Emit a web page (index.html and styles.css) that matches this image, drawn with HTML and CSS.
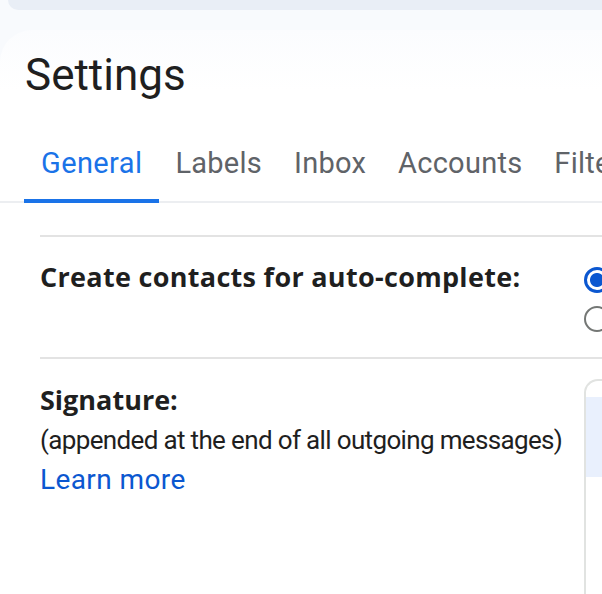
FILE: index.html
```html
<!DOCTYPE html>
<html lang="en">
<head>
<meta charset="utf-8">
<title>Settings</title>
<link rel="stylesheet" href="styles.css">
</head>
<body>
<div class="topbar"></div>
<main class="card">
  <h1 class="title">Settings</h1>
  <nav class="tabs">
    <div class="tab active">General</div>
    <div class="tab">Labels</div>
    <div class="tab">Inbox</div>
    <div class="tab">Accounts</div>
    <div class="tab">Filters and Blocked Addresses</div>
  </nav>
  <section class="content">
    <div class="row row-contacts">
      <div class="label">
        <div class="strong wide">Create contacts for auto-complete:</div>
      </div>
      <div class="control radios">
        <span class="radio checked"></span>
        <span class="radio"></span>
      </div>
    </div>
    <div class="row row-signature">
      <div class="label">
        <div class="strong">Signature:</div>
        <div class="note">(appended at the end of all outgoing messages)</div>
        <a class="link" href="#">Learn more</a>
      </div>
      <div class="control">
        <div class="sigbox">
          <div class="sigband"></div>
        </div>
      </div>
    </div>
  </section>
</main>
</body>
</html>
```
FILE: styles.css
```css
html, body {
  margin: 0;
  padding: 0;
}
body {
  width: 602px;
  height: 594px;
  overflow: hidden;
  background: #f8fafd;
  font-family: Roboto, "Liberation Sans", Arial, sans-serif;
  color: #1f1f1f;
}
.topbar {
  height: 10px;
  margin-left: 8px;
  background: #e9eef6;
  border-bottom-left-radius: 24px;
}
.card {
  margin-top: 20px;
  height: 564px;
  background: linear-gradient(#fbfcfe, #ffffff 60px);
  border-top-left-radius: 32px;
  overflow: hidden;
}
.title {
  margin: 0;
  padding: 20px 0 0 25px;
  font-size: 44px;
  font-weight: 400;
  line-height: 50px;
  color: #1f1f1f;
}
.tabs {
  display: flex;
  margin-top: 43px;
  padding-left: 24px;
  border-bottom: 2px solid #eceef1;
  white-space: nowrap;
}
.tab {
  flex: none;
  padding: 0 16px 16px;
  font-size: 29px;
  letter-spacing: 0.25px;
  line-height: 40px;
  color: #5f6368;
  border-bottom: 4px solid transparent;
  margin-bottom: -2px;
}
.tab.active {
  color: #1a73e8;
  border-bottom-color: #1a73e8;
  padding: 0 17px 16px;
  letter-spacing: 0.4px;
}
.content {
  margin-top: 32px;
  padding-left: 40px;
}
.row {
  display: flex;
  border-top: 2px solid #e3e3e3;
}
.label {
  flex: none;
  width: 544px;
  font-size: 26px;
  line-height: 40px;
  white-space: nowrap;
}
.strong {
  font-family: "Open Sans", Roboto, sans-serif;
  font-size: 27px;
  font-weight: 700;
}
.strong.wide {
  letter-spacing: 0.3px;
}
.note {
  color: #1f1f1f;
  letter-spacing: -0.65px;
}
.link {
  display: block;
  color: #0b57d0;
  text-decoration: none;
  font-size: 28px;
  letter-spacing: 0.4px;
}
.row-contacts {
  height: 120px;
}
.row-contacts .label {
  padding-top: 20px;
}
.radios {
  display: flex;
  flex-direction: column;
  gap: 13px;
  padding-top: 30px;
}
.radio {
  display: block;
  width: 26px;
  height: 26px;
  box-sizing: border-box;
  border-radius: 50%;
  border: 2.5px solid #747775;
}
.radio.checked {
  border: 3px solid #0b57d0;
  background: radial-gradient(circle, #0b57d0 0 6.5px, #ffffff 7.5px);
}
.row-signature .label {
  padding-top: 21px;
}
.control {
  flex: 1;
}
.sigbox {
  margin-top: 20px;
  width: 400px;
  height: 300px;
  border-top: 2px solid #e1e3e1;
  border-left: 2px solid #e1e3e1;
  border-top-left-radius: 14px;
  padding-top: 16px;
  background: #ffffff;
}
.sigband {
  height: 80px;
  background: #e9f0fd;
}
```
